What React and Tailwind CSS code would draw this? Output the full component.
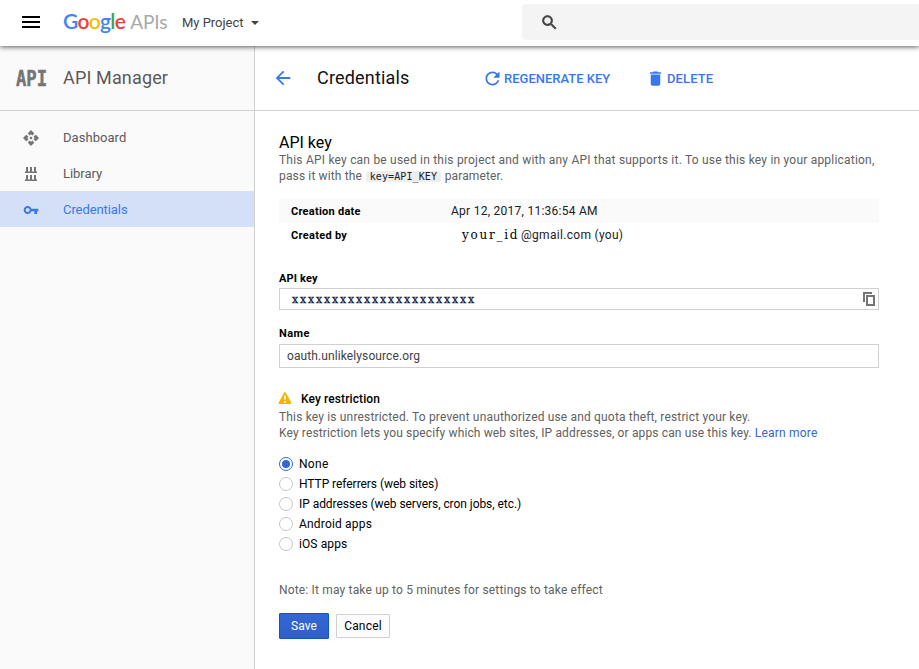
import React from "react";

const navItems = [
  { label: "Dashboard", icon: "dashboard", tracking: "tracking-[0.05px]" },
  { label: "Library", icon: "library", tracking: "tracking-[-0.05px]" },
  { label: "Credentials", icon: "key", tracking: "tracking-[-0.08px]", active: true },
];

const restrictions = [
  { label: "None", checked: true, tracking: "tracking-[0.3px]" },
  { label: "HTTP referrers (web sites)", tracking: "tracking-[-0.05px]" },
  { label: "IP addresses (web servers, cron jobs, etc.)", tracking: "tracking-[-0.05px]" },
  { label: "Android apps", tracking: "tracking-[0.18px]" },
  { label: "iOS apps", tracking: "tracking-[0.1px]" },
];

function Icon({ d, className }) {
  return (
    <svg viewBox="0 0 24 24" className={`shrink-0 fill-current ${className}`}>
      <path d={d} />
    </svg>
  );
}

function NavIcon({ name }) {
  if (name === "dashboard") {
    return (
      <svg viewBox="0 0 16 16" className="mt-px size-4 fill-[#757575]">
        <path d="M8 0 11.200 3.200 9.500 5.500 8 4.300 6.500 5.500 4.800 3.200zM8 16 11.200 12.800 9.500 10.500 8 11.700 6.500 10.500 4.800 12.800zM0 8 3.200 4.800 5.500 6.500 4.300 8 5.500 9.500 3.200 11.200zM16 8 12.800 4.800 10.500 6.500 11.700 8 10.500 9.500 12.800 11.200z" />
        <circle cx="8" cy="8" r="1.300" />
      </svg>
    );
  }
  if (name === "library") {
    return (
      <svg viewBox="0 0 16 16" className="mt-px size-4 fill-[#757575]">
        <path d="M3 1h2v4.500h2V1h2v4.500h2V1h2v4.500h1V7H2V5.500h1zM3 9h2v4.500h2V9h2v4.500h2V9h2v4.500h1V15H2v-1.500h1z" />
      </svg>
    );
  }
  return (
    <Icon
      className="mt-px size-4 text-[#3b78e7]"
      d="M12.650 10C11.830 7.670 9.610 6 7 6c-3.310 0-6 2.690-6 6s2.690 6 6 6c2.610 0 4.830-1.670 5.650-4H17v4h4v-4h2v-4H12.650zM7 15c-1.650 0-3-1.350-3-3s1.350-3 3-3 3 1.350 3 3-1.350 3-3 3z"
    />
  );
}

function TopBar() {
  return (
    <header className="relative z-10 flex h-[46px] shrink-0 items-start bg-white shadow-[0_1px_5px_rgba(0,0,0,0.65)]">
      <div className="ml-[22px] mt-4 flex w-[18px] flex-col gap-[3px]">
        <span className="h-0.5 bg-black" />
        <span className="h-0.5 bg-black" />
        <span className="h-0.5 bg-black" />
      </div>
      <div className="ml-[23px] mt-[6px] flex w-[119px] items-baseline whitespace-nowrap font-['Lato'] leading-[30px]">
        <span className="text-[21px] font-semibold tracking-[-0.7px]">
          <span className="text-[#4285f4]">G</span>
          <span className="text-[#ea4335]">o</span>
          <span className="text-[#fbbc05]">o</span>
          <span className="text-[#4285f4]">g</span>
          <span className="text-[#34a853]">l</span>
          <span className="text-[#ea4335]">e</span>
        </span>
        <span className="ml-[5px] text-[19px] tracking-[-0.1px] text-[#a9a9a9]">APIs</span>
      </div>
      <div className="mt-[14px] flex h-[18px] items-center text-[13px] text-[#424242]">
        <span className="tracking-[-0.03px]">My Project</span>
        <span className="ml-2 border-x-4 border-t-4 border-x-transparent border-t-[#424242]" />
      </div>
      <div className="absolute left-[522px] right-0 top-1 flex h-9 items-center rounded-l-sm bg-[#f4f4f4] pl-[18px]">
        <Icon
          className="size-[19px] stroke-current stroke-[0.7] text-[#424242]"
          d="M15.500 14h-.79l-.28-.27C15.410 12.590 16 11.110 16 9.500 16 5.910 13.090 3 9.500 3S3 5.910 3 9.500 5.910 16 9.500 16c1.610 0 3.090-.59 4.230-1.570l.27.28v.79l5 4.990L20.490 19l-4.990-5zm-6 0C7.010 14 5 11.990 5 9.500S7.010 5 9.500 5 14 7.010 14 9.500 11.990 14 9.500 14z"
        />
      </div>
    </header>
  );
}

function Sidebar() {
  return (
    <aside className="w-[255px] shrink-0 border-r border-[#d0d0d0] bg-[#fafafa]">
      <div className="flex h-[65px] items-center border-b border-[#d0d0d0] pl-4">
        <span className="w-[47px] origin-left scale-x-[0.82] pt-px font-['DejaVu_Sans_Mono'] text-[21px] font-bold leading-[22px] text-[#757575] [-webkit-text-stroke:0.5px_#757575]">
          API
        </span>
        <span className="text-[18px] leading-6 tracking-[0.15px] text-[#5a5a5a]">API Manager</span>
      </div>
      <nav className="pt-2 text-[13px]">
        {navItems.map((item) => (
          <div
            key={item.label}
            className={`flex h-9 items-center pl-[23px] ${item.active ? "bg-[#d4e0f7] text-[#3b78e7]" : "text-[#5a5a5a]"}`}
          >
            <NavIcon name={item.icon} />
            <span className={`ml-6 pt-[2px] ${item.tracking}`}>{item.label}</span>
          </div>
        ))}
      </nav>
    </aside>
  );
}

function Toolbar() {
  return (
    <div className="flex h-[65px] items-center border-b border-[#d0d0d0] pl-[17px] text-[#3b78e7]">
      <Icon
        className="size-[22px]"
        d="M20 11H7.830l5.590-5.590L12 4l-8 8 8 8 1.410-1.410L7.830 13H20v-2z"
      />
      <span className="ml-[23px] w-[164.500px] text-[18px] leading-6 tracking-[0.18px] text-[#111]">Credentials</span>
      <Icon
        className="size-[21px]"
        d="M17.650 6.350C16.200 4.900 14.210 4 12 4c-4.420 0-7.990 3.580-7.990 8s3.570 8 7.990 8c3.730 0 6.840-2.550 7.730-6h-2.080c-.82 2.330-3.040 4-5.650 4-3.310 0-6-2.690-6-6s2.690-6 6-6c1.660 0 3.140.69 4.220 1.780L13 11h7V4l-2.350 2.350z"
      />
      <span className="ml-[1.500px] w-[141.500px] pt-[2px] text-[13px] font-medium">REGENERATE KEY</span>
      <Icon
        className="size-[19px]"
        d="M6 19c0 1.100.9 2 2 2h8c1.100 0 2-.9 2-2V7H6v12zM19 4h-3.500l-1-1h-5l-1 1H5v2h14V4z"
      />
      <span className="ml-[2.500px] pt-[2px] text-[13px] font-medium tracking-[0.1px]">DELETE</span>
    </div>
  );
}

function Details() {
  return (
    <dl className="mt-[14px] text-[12px] leading-6">
      <div className="flex h-6 bg-[#fafafa] pl-3">
        <dt className="w-40 pt-px text-[11px] font-bold tracking-[0.25px] text-black">Creation date</dt>
        <dd className="tracking-[0.26px] text-[#212121]">Apr 12, 2017, 11:36:54 AM</dd>
      </div>
      <div className="flex h-6 pl-3">
        <dt className="w-[171px] pt-px text-[11px] font-bold tracking-[0.3px] text-black">Created by</dt>
        <dd className="flex text-[#212121]">
          <span className="w-[59px] font-['DejaVu_Serif'] tracking-[1.750px] text-black">your_id</span>
          <span className="tracking-[0.3px]">@gmail.com (you)</span>
        </dd>
      </div>
    </dl>
  );
}

function Radio({ checked }) {
  return (
    <span
      className={`flex size-[14px] items-center justify-center rounded-full border ${checked ? "border-[#3367d6]" : "border-[#c6c6c6]"}`}
    >
      {checked && <span className="size-2 rounded-full bg-[#3367d6]" />}
    </span>
  );
}

function KeyForm() {
  return (
    <div className="w-[600px] text-[12px]">
      <label className="mt-6 block text-[11px] font-bold leading-4 tracking-[0.15px] text-black">API key</label>
      <div className="mt-px flex h-[22px] items-center justify-between border border-[#d0d0d0] pl-3">
        <span className="pt-px font-['DejaVu_Serif'] text-[11px] leading-5 tracking-[1.795px] text-[#212121] [-webkit-text-stroke:0.3px_#212121]">
          xxxxxxxxxxxxxxxxxxxxxxx
        </span>
        <svg viewBox="0 0 16 16" className="size-4 fill-none stroke-[#757575] stroke-2">
          <path d="M2 11V2h8" />
          <path d="M5 5h7v9H5z" />
        </svg>
      </div>
      <label className="mt-4 block text-[11px] font-bold leading-4 tracking-[0.4px] text-black">Name</label>
      <div className="mt-[2px] flex h-6 items-center border border-[#d0d0d0] pl-[7px] tracking-[0.1px] text-[#424242]">
        oauth.unlikelysource.org
      </div>
      <div className="mt-[23px] flex h-4 items-center text-black">
        <svg viewBox="0 0 14 14" className="-ml-px -mt-[2px] size-[14px]">
          <path d="M7 2 12.500 12h-11z" fill="#f4b400" stroke="#f4b400" strokeWidth="1.800" strokeLinejoin="round" />
          <path d="M7 4.500v4M7 10v1.700" stroke="#fff" strokeWidth="1.700" />
        </svg>
        <span className="ml-[9px] font-medium tracking-[0.1px]">Key restriction</span>
      </div>
      <p className="mt-[2px] whitespace-nowrap leading-4 text-[#616161]">
        <span className="tracking-[0.165px]">This key is unrestricted. To prevent unauthorized use and quota theft, restrict your key.</span>
        <br />
        <span className="tracking-[0.135px]">
          Key restriction lets you specify which web sites, IP addresses, or apps can use this key.{" "}
        </span>
        <a className="tracking-[0.2px] text-[#3367d6]">Learn more</a>
      </p>
      <div className="mt-[13px] text-black">
        {restrictions.map((option) => (
          <div key={option.label} className="flex h-5 items-center gap-[6px]">
            <Radio checked={option.checked} />
            <span className={option.tracking}>{option.label}</span>
          </div>
        ))}
      </div>
      <p className="mt-7 leading-4 tracking-[0.17px] text-[#616161]">
        Note: It may take up to 5 minutes for settings to take effect
      </p>
      <div className="mt-[15px] flex items-center gap-[7px]">
        <button className="h-[26px] w-[50px] rounded-[1px] border border-[#1155cc] bg-[#3367d6] bg-linear-to-b from-[#3367d6] to-[#3060c8] tracking-[0.1px] text-white">
          Save
        </button>
        <button className="h-6 w-[54px] rounded-[1px] border border-[#d0d0d0] bg-[#fcfcfc] tracking-[0.2px] text-black">
          Cancel
        </button>
      </div>
    </div>
  );
}

export default function App() {
  return (
    <div className="flex h-[669px] w-[919px] flex-col overflow-hidden bg-white font-['Roboto',sans-serif]">
      <TopBar />
      <div className="flex min-h-0 flex-1">
        <Sidebar />
        <main className="min-w-0 flex-1">
          <Toolbar />
          <div className="w-[624px] pl-6 pt-[22px]">
            <h1 className="text-[16px] leading-[19px] text-black">API key</h1>
            <p className="whitespace-nowrap text-[12px] leading-4 tracking-[0.14px] text-[#616161]">
              <span className="tracking-[0.21px]">
                This API key can be used in this project and with any API that supports it. To use this key in your application,
              </span>
              <br />
              pass it with the{" "}
              <code className="mx-px rounded-[2px] bg-[#eee] px-[3.500px] font-['DejaVu_Sans_Mono'] text-[10px] tracking-[0.1px] text-[#212121]">
                key=API_KEY
              </code>{" "}
              parameter.
            </p>
            <Details />
            <KeyForm />
          </div>
        </main>
      </div>
    </div>
  );
}
